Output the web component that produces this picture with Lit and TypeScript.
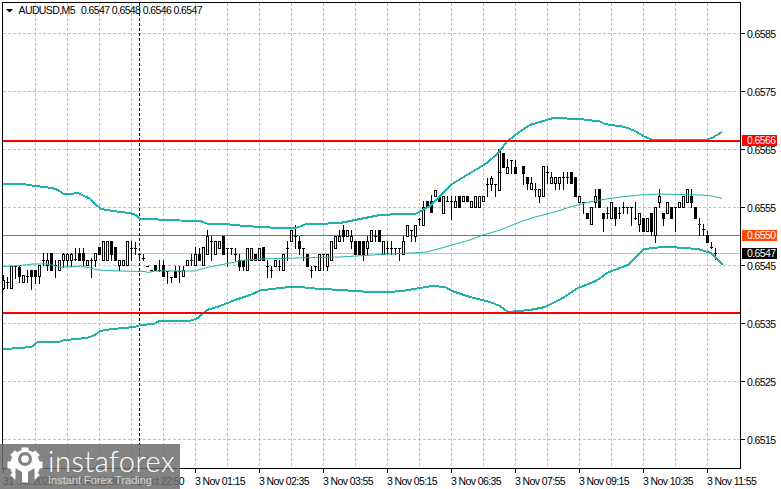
import { LitElement, html, css, svg } from "lit";
import { customElement } from "lit/decorators.js";

type C = [number, number, number, number, number?];
// bars read from the reference: [high, bodyTop, bodyBottom, low, filled]; y = base + v/3
const A: C[] = [
[335,350,376,378],[342,358,358,375],[308,308,376,376],[308,310,310,345],[307,312,340,358,1],[335,335,358,358],[320,338,338,358],[322,322,340,378,1],[322,322,340,360,1],[307,307,340,360],
[270,290,290,305],[270,290,305,322],[270,270,322,322,1],[290,307,307,342],[290,290,322,322],[270,272,290,312],[270,272,290,308],[270,272,290,310],[255,288,288,292],[255,270,290,290,1],
[255,270,290,306,1],[290,290,307,307],[285,290,290,342],[270,270,290,308],[253,253,272,272,1],[235,235,290,290],[235,235,290,290],[235,235,272,290,1],[253,253,290,290,1],[290,290,307,322],
[290,290,307,307],[235,235,307,307],[235,254,254,290],[238,254,254,272],[272,272,272,290],[272,284,284,290],[308,308,308,308],[322,322,322,322],[307,307,322,322,1],[290,322,322,325],
[290,307,340,340,1],[325,325,325,360],[342,342,342,358],[308,325,342,342,1],[308,325,325,358],[308,322,340,340],[290,290,307,307],[272,290,290,307],[253,272,307,307],[255,272,290,290,1],
[253,253,307,307],[202,218,272,272],[218,235,235,290],[235,235,272,272],[235,235,254,254],[218,218,272,272,1],[254,254,254,308],[254,254,254,272],[255,272,272,290],[272,290,308,322,1],
[290,290,308,322,1],[254,254,322,322],[254,254,290,290],[272,272,290,290,1],[254,254,290,290]];
const B: C[] = [
[253,253,290,290,1],[290,308,308,342],[308,322,322,342],[290,290,308,308],[290,308,308,322],[272,272,322,322],[235,254,254,290],[202,202,235,235],[185,218,218,254],[218,235,254,272,1],
[254,254,254,290],[272,272,308,308,1],[308,322,322,342],[308,308,308,322],[272,272,322,322],[272,272,272,322],[272,272,308,322],[235,235,290,290],[218,218,254,254],[202,218,235,235],
[185,202,218,235,1],[202,202,218,218],[202,218,235,254],[235,235,272,272,1],[235,235,272,272,1],[235,235,272,290,1],[218,235,254,272],[202,202,235,235],[202,218,218,235],[202,202,235,235,1],
[235,235,272,272],[235,254,254,272],[235,254,254,272],[254,254,254,272],[254,254,254,290],[218,235,272,272],[185,185,218,218],[202,202,202,235],[185,185,218,235],[165,168,168,185],
[115,133,185,185],[115,115,133,133,1],[95,115,148,148,1],[80,80,98,98],[98,98,115,115,1],[98,98,150,150],[98,115,115,115],[98,115,115,168],[98,115,133,133],[98,98,133,133,1],
[98,98,115,115],[98,98,115,115,1],[115,115,133,133],[98,98,133,133],[98,98,133,133],[98,98,115,115],[45,62,62,98],[40,45,62,80],[62,62,62,98],[28,28,80,80]];
const B2: C[] = [[88,88,155,155],[100,100,140,140,1],[118,140,158,158],[120,120,120,160],[120,140,158,160,1]];
const D: C[] = [
[198,198,220,252,1],[232,232,250,268,1],[232,250,268,268],[250,268,268,287],[268,268,287,305],[198,198,287,287],[198,215,215,250],[215,232,250,250],[232,232,250,268],[232,232,250,268],
[215,232,232,268],[215,232,232,250],[215,215,250,250,1],[232,232,287,287,1],[287,287,305,305],[305,305,305,338],[338,338,355,355,1],[322,322,373,373],[268,287,305,322],[268,268,322,322,1],
[338,338,355,392,1],[322,338,338,355],[305,305,355,355],[322,322,355,375,1],[322,338,338,355],[305,322,322,338],[322,322,322,338],[322,322,322,375],[305,355,355,358],[338,338,373,392],
[355,355,392,392,1],[355,355,392,392],[338,338,392,405,1],[322,322,405,425],[268,287,305,322],[338,338,355,375,1],[305,305,338,338],[322,322,355,355,1],[322,322,322,392],[305,305,322,322],
[287,287,322,322],[268,268,305,305],[268,287,305,322,1],[322,322,355,355,1],[355,372,372,405],[372,388,388,405],[392,405,425,425,1],[425,440,440,445],[445,460,460,478]];

const gridX = Array.from({ length: 22 }, (_, i) => 35.5 + 32 * i);
const gridY = Array.from({ length: 8 }, (_, i) => 33.5 + 58 * i);
const prices = ["0.6585","0.6575","0.6565","0.6555","0.6545","0.6535","0.6525","0.6515"];
const times: [number, string][] = [[3,"31 Oct 2025"],[67,"31 Oct 21:30"],[131,"31 Oct 22:50"],[195,"3 Nov 01:15"],[259,"3 Nov 02:35"],[323,"3 Nov 03:55"],[387,"3 Nov 05:15"],[451,"3 Nov 06:35"],[515,"3 Nov 07:55"],[579,"3 Nov 09:15"],[643,"3 Nov 10:35"],[707,"3 Nov 11:55"]];

const upper = "3,184 23,184 32,185.5 40,186.5 52,188 58,190 63,193.5 70,194 78,193 84,196 90,198.5 95,204 101,209 110,210.5 120,212 130,213 136,215 140,219 158,219.5 180,220.5 200,221 207,223.5 230,224.5 245,226 260,227 280,228 296,228 300,226.5 305,224.5 340,223 350,221 380,215 400,214 415,214 420,211.5 430,206 442,194 452,184 467,175 487,163 498,153 507,141.5 520,131.5 530,125 540,122 553,118 580,119 600,121.5 605,124 625,127 635,131 645,137 652,139.5 660,140 672,140 705,140 712,138 722,132";
const middle = "3,266.5 20,265.5 33,264 47,264 60,267 70,267 80,266 90,268 98,270 120,271 145,271.5 148,272.5 155,271 170,271 195,271 205,268 225,264 245,260 260,259 295,258 340,257 380,254.5 410,253 427,252 445,247 470,240 483,235 500,230 520,222 535,217 555,212 570,207 585,203 600,200 620,197 640,195 660,194 680,194.5 700,195 712,196 722,198.5";
const lower = "3,349 22,348 32,346.5 37,342.5 60,341.5 65,340 78,339 88,337.5 95,335 100,331 112,329 135,327 139,325.5 155,323.5 160,320.5 175,320.5 190,321 198,318 207,310 220,306 235,300 250,295 260,290.5 272,289 290,287 300,287 315,288.5 340,290 370,292 390,292 405,290.5 420,288 432,286 445,287 452,291 470,297 490,302 500,306 508,312 530,310 545,307 561,299 578,288 596,281 608,272.5 628,265 636,257 644,249 666,246.7 698,249 711,253 723,265";

function bar(c: C, k: number, base: number) {
  const x = 3 + 4 * k;
  const y = (v: number) => Math.round(base + v / 3);
  const [hi, t, b, lo, f] = c;
  const top = y(t), bot = y(b);
  const wick = svg`<rect class="k" x=${x} y=${y(hi)} width="1" height=${Math.max(1, y(lo) - y(hi) + 1)}></rect>`;
  if (top === bot) return svg`${wick}<rect class="k" x=${x - 1} y=${top} width="3" height="1"></rect>`;
  return svg`${wick}<rect class=${f ? "k" : "h"} x=${x - 0.5 - (f ? 0.5 : 0)} y=${f ? top : top + 0.5} width=${f ? 3 : 2} height=${f ? bot - top + 1 : bot - top}></rect>`;
}

@customElement("app-root")
export class AppRoot extends LitElement {
  static styles = css`
    :host { display: block; position: relative; width: 781px; height: 489px; background: #fff; overflow: hidden; }
    .chart { display: block; }
    .grid { stroke: #c0c0c0; stroke-width: 1; stroke-dasharray: 3 2; }
    .frame { fill: none; stroke: #000; stroke-width: 1; }
    .tick { stroke: #000; stroke-width: 1; }
    .cross { stroke: #000; stroke-width: 1; stroke-dasharray: 3 2; }
    .k { fill: #000; }
    .h { fill: #fff; stroke: #000; stroke-width: 1; }
    .candles rect { shape-rendering: crispEdges; }
    .band { fill: none; stroke: #20b2aa; stroke-width: 2; shape-rendering: crispEdges; }
    .mid { fill: none; stroke: #20b2aa; stroke-width: 1; }
    text { font-family: "Liberation Sans", Arial, sans-serif; font-size: 10.5px; letter-spacing: -0.6px; fill: #000; }
    .w { fill: #fff; }
    .mark { position: absolute; left: 0; bottom: 0; width: 180px; height: 45px; background: rgba(109,109,109,0.85); display: flex; gap: 5px; padding: 3px 0 0 7px; box-sizing: border-box; align-items: flex-start; overflow: hidden; }
    .gear { flex: none; width: 36px; height: 36px; }
    .brand { display: flex; flex-direction: column; color: #fff; font-family: Lato, "Open Sans", sans-serif; }
    .name { font-size: 29px; line-height: 27px; font-weight: 300; letter-spacing: 0.5px; white-space: nowrap; }
    .tag { font-family: "Liberation Sans", Arial, sans-serif; font-size: 11px; line-height: 13px; color: #d4d4d4; white-space: nowrap; }
  `;

  render() {
    return html`
      <svg class="chart" width="781" height="489" viewBox="0 0 781 489">
        ${gridX.map(x => svg`<line class="grid" x1=${x} x2=${x} y1="3" y2="468"></line>`)}
        ${gridY.map(y => svg`<line class="grid" x1="3" x2="740" y1=${y} y2=${y}></line>`)}
        <rect x="3" y="253" width="737" height="1" fill="#c0c0c0"></rect>
        <rect x="3" y="235" width="737" height="1" fill="#ff4500"></rect>
        <line class="cross" x1="139.5" x2="139.5" y1="3" y2="468"></line>
        <g class="candles">
          ${A.map((c, i) => bar(c, i, 163))}
          ${B.map((c, i) => bar(c, i + 65, 163))}
          ${B2.map((c, i) => bar(c, i + 124, 120))}
          ${D.map((c, i) => bar(c, i + 130, 100))}
        </g>
        <polyline class="band" points=${upper}></polyline>
        <polyline class="mid" points=${middle}></polyline>
        <polyline class="band" points=${lower}></polyline>
        <rect x="3" y="140" width="737" height="2" fill="#f00"></rect>
        <rect x="3" y="312" width="737" height="2" fill="#f00"></rect>
        <rect class="frame" x="2.5" y="2.5" width="738" height="466"></rect>
        ${gridY.map((y, i) => svg`<line class="tick" x1="741" x2="745" y1=${y} y2=${y}></line><text x="747" y=${y + 4}>${prices[i]}</text>`)}
        ${times.map(([x, t]) => svg`<line class="tick" x1=${x + 0.5} x2=${x + 0.5} y1="469" y2="473"></line><text x=${x} y="485">${t}</text>`)}
        <path d="M6 9h7l-3.5 3.5z" fill="#000"></path>
        <text x="18.5" y="14">AUDUSD,M5</text>
        <text x="81" y="14">0.6547 0.6548 0.6546 0.6547</text>
        <rect x="742" y="135" width="35" height="11" fill="#f00"></rect>
        <text class="w" x="747" y="144">0.6566</text>
        <rect x="742" y="230" width="35" height="11" fill="#ff4500"></rect>
        <text class="w" x="747" y="239">0.6550</text>
        <rect x="742" y="248" width="35" height="11" fill="#000"></rect>
        <text class="w" x="747" y="257">0.6547</text>
      </svg>
      <div class="mark">
        <svg class="gear" viewBox="0 0 36 36">
          <g fill="#fff">
            ${[0, 45, 90, 135, 180, 225, 270, 315].map(a => svg`<rect x="14.5" y="0.5" width="7" height="7" transform="rotate(${a} 18 18)"></rect>`)}
            <circle cx="18" cy="18" r="15"></circle>
          </g>
          <circle cx="18" cy="12" r="7" fill="#838383"></circle>
          <circle cx="18" cy="12" r="3.8" fill="#fff"></circle>
          <path d="M8.5 21L15 25V36H8.5Z" fill="#838383"></path>
          <path d="M27.5 21L21 25V36H27.5Z" fill="#838383"></path>
        </svg>
        <div class="brand">
          <span class="name">instaforex</span>
          <span class="tag">Instant Forex Trading</span>
        </div>
      </div>
    `;
  }
}
